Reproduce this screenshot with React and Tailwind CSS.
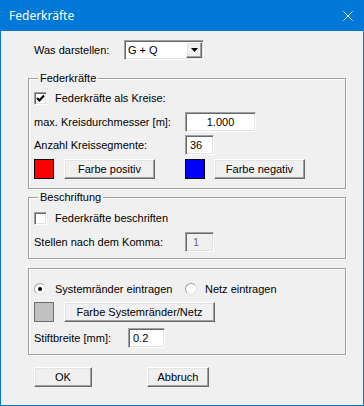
const sunken =
  "border border-t-[#a0a0a0] border-l-[#a0a0a0] border-b-white border-r-white shadow-[inset_1px_1px_0_#696969,inset_-1px_-1px_0_#e3e3e3]";
const raised =
  "border border-t-white border-l-white border-b-[#696969] border-r-[#696969] shadow-[inset_-1px_-1px_0_#a0a0a0,inset_1px_1px_0_#e3e3e3]";

function Group({ label, className, children }) {
  return (
    <div
      className={`relative w-[318px] border border-[#a0a0a0] pl-[5px] shadow-[inset_1px_1px_0_#fff,1px_1px_0_#fff] ${className}`}
    >
      {label ? (
        <span className="absolute left-[9px] -top-[8px] bg-[#f0f0f0] px-[2px] leading-[14px]">
          {label}
        </span>
      ) : null}
      {children}
    </div>
  );
}

function Button({ children, className }) {
  return (
    <div
      className={`flex h-[20px] items-center justify-center bg-[#f0f0f0] ${raised} ${className}`}
    >
      {children}
    </div>
  );
}

function Edit({ value, className, disabled }) {
  return (
    <div
      className={`flex h-[20px] items-center px-[4px] ${sunken} ${
        disabled ? "bg-[#f0f0f0] text-[#6d6d6d]" : "bg-white"
      } ${className}`}
    >
      {value}
    </div>
  );
}

function Checkbox({ checked }) {
  return (
    <div className={`flex h-[13px] w-[13px] shrink-0 items-center justify-center bg-white ${sunken}`}>
      {checked ? (
        <svg width="9" height="9" viewBox="0 0 9 9">
          <path d="M1 4 L3.5 6.5 L8 1.5" fill="none" stroke="#000" strokeWidth="2" />
        </svg>
      ) : null}
    </div>
  );
}

function Radio({ checked }) {
  return (
    <div className="flex h-[12px] w-[12px] shrink-0 items-center justify-center rounded-full border border-t-[#a0a0a0] border-l-[#a0a0a0] border-b-[#e3e3e3] border-r-[#e3e3e3] bg-white">
      {checked ? <div className="h-[4px] w-[4px] rounded-full bg-black" /> : null}
    </div>
  );
}

export default function App() {
  return (
    <div className="flex h-[406px] w-[364px] flex-col border-x border-b border-[#0078d7] bg-[#f0f0f0] font-['Liberation_Sans',Arial,sans-serif] text-[11px] text-black">
      <div className="flex h-[31px] shrink-0 items-center justify-between bg-[#0078d7] pl-[8px] pr-[10px] font-['Noto_Sans',sans-serif] text-[12px] text-white">
        <span>Federkräfte</span>
        <svg width="10" height="10" viewBox="0 0 10 10">
          <path d="M0.5 0.5 L9.5 9.5 M9.5 0.5 L0.5 9.5" stroke="#fff" strokeWidth="1" />
        </svg>
      </div>

      <div className="pl-[27px]">
        <div className="mt-[9px] ml-[6px] flex h-[20px] items-center">
          <span className="w-[90px]">Was darstellen:</span>
          <div className={`flex h-[20px] w-[80px] items-center justify-between bg-white pl-[3px] pr-[1px] ${sunken}`}>
            <span>G + Q</span>
            <div className={`flex h-[16px] w-[16px] items-center justify-center bg-[#f0f0f0] ${raised}`}>
              <svg width="7" height="4" viewBox="0 0 7 4">
                <path d="M0 0 H7 L3.5 4 Z" fill="#000" />
              </svg>
            </div>
          </div>
        </div>

        <Group label="Federkräfte" className="mt-[18px] pt-[9px] pb-[9px]">
          <div className="flex h-[20px] items-center">
            <Checkbox checked />
            <span className="ml-[8px]">Federkräfte als Kreise:</span>
          </div>
          <div className="mt-[4px] flex h-[20px] items-center">
            <span className="w-[151px]">max. Kreisdurchmesser [m]:</span>
            <Edit value="1.000" className="w-[71px] justify-center" />
          </div>
          <div className="mt-[3px] flex h-[20px] items-center">
            <span className="w-[151px]">Anzahl Kreissegmente:</span>
            <Edit value="36" className="w-[29px]" />
          </div>
          <div className="mt-[4px] flex h-[20px] items-center">
            <div className="flex w-[151px] items-center">
              <div className="h-[20px] w-[20px] border border-black bg-[#ff0000]" />
              <Button className="ml-[10px] w-[91px]">Farbe positiv</Button>
            </div>
            <div className="h-[20px] w-[20px] border border-black bg-[#0000ff]" />
            <Button className="ml-[9px] w-[91px]">Farbe negativ</Button>
          </div>
        </Group>

        <Group label="Beschriftung" className="mt-[8px] pt-[10px] pb-[6px]">
          <div className="flex h-[20px] items-center">
            <Checkbox />
            <span className="ml-[8px]">Federkräfte beschriften</span>
          </div>
          <div className="mt-[4px] flex h-[20px] items-center">
            <span className="w-[151px]">Stellen nach dem Komma:</span>
            <Edit value="1" disabled className="w-[29px] pl-[7px]" />
          </div>
        </Group>

        <Group className="mt-[9px] pt-[10px] pb-[6px]">
          <div className="flex h-[20px] items-center">
            <div className="flex w-[151px] items-center">
              <Radio checked />
              <span className="ml-[9px]">Systemränder eintragen</span>
            </div>
            <Radio />
            <span className="ml-[8px]">Netz eintragen</span>
          </div>
          <div className="mt-[3px] flex h-[20px] items-center">
            <div className="h-[20px] w-[20px] border border-[#6d6d6d] bg-[#c0c0c0]" />
            <Button className="ml-[10px] w-[151px]">Farbe Systemränder/Netz</Button>
          </div>
          <div className="mt-[6px] flex h-[20px] items-center">
            <span className="w-[94px]">Stiftbreite [mm]:</span>
            <Edit value="0.2" className="w-[37px]" />
          </div>
        </Group>

        <div className="mt-[12px] ml-[6px] flex items-center">
          <Button className="w-[58px]">OK</Button>
          <Button className="ml-[55px] w-[62px]">Abbruch</Button>
        </div>
      </div>
    </div>
  );
}
